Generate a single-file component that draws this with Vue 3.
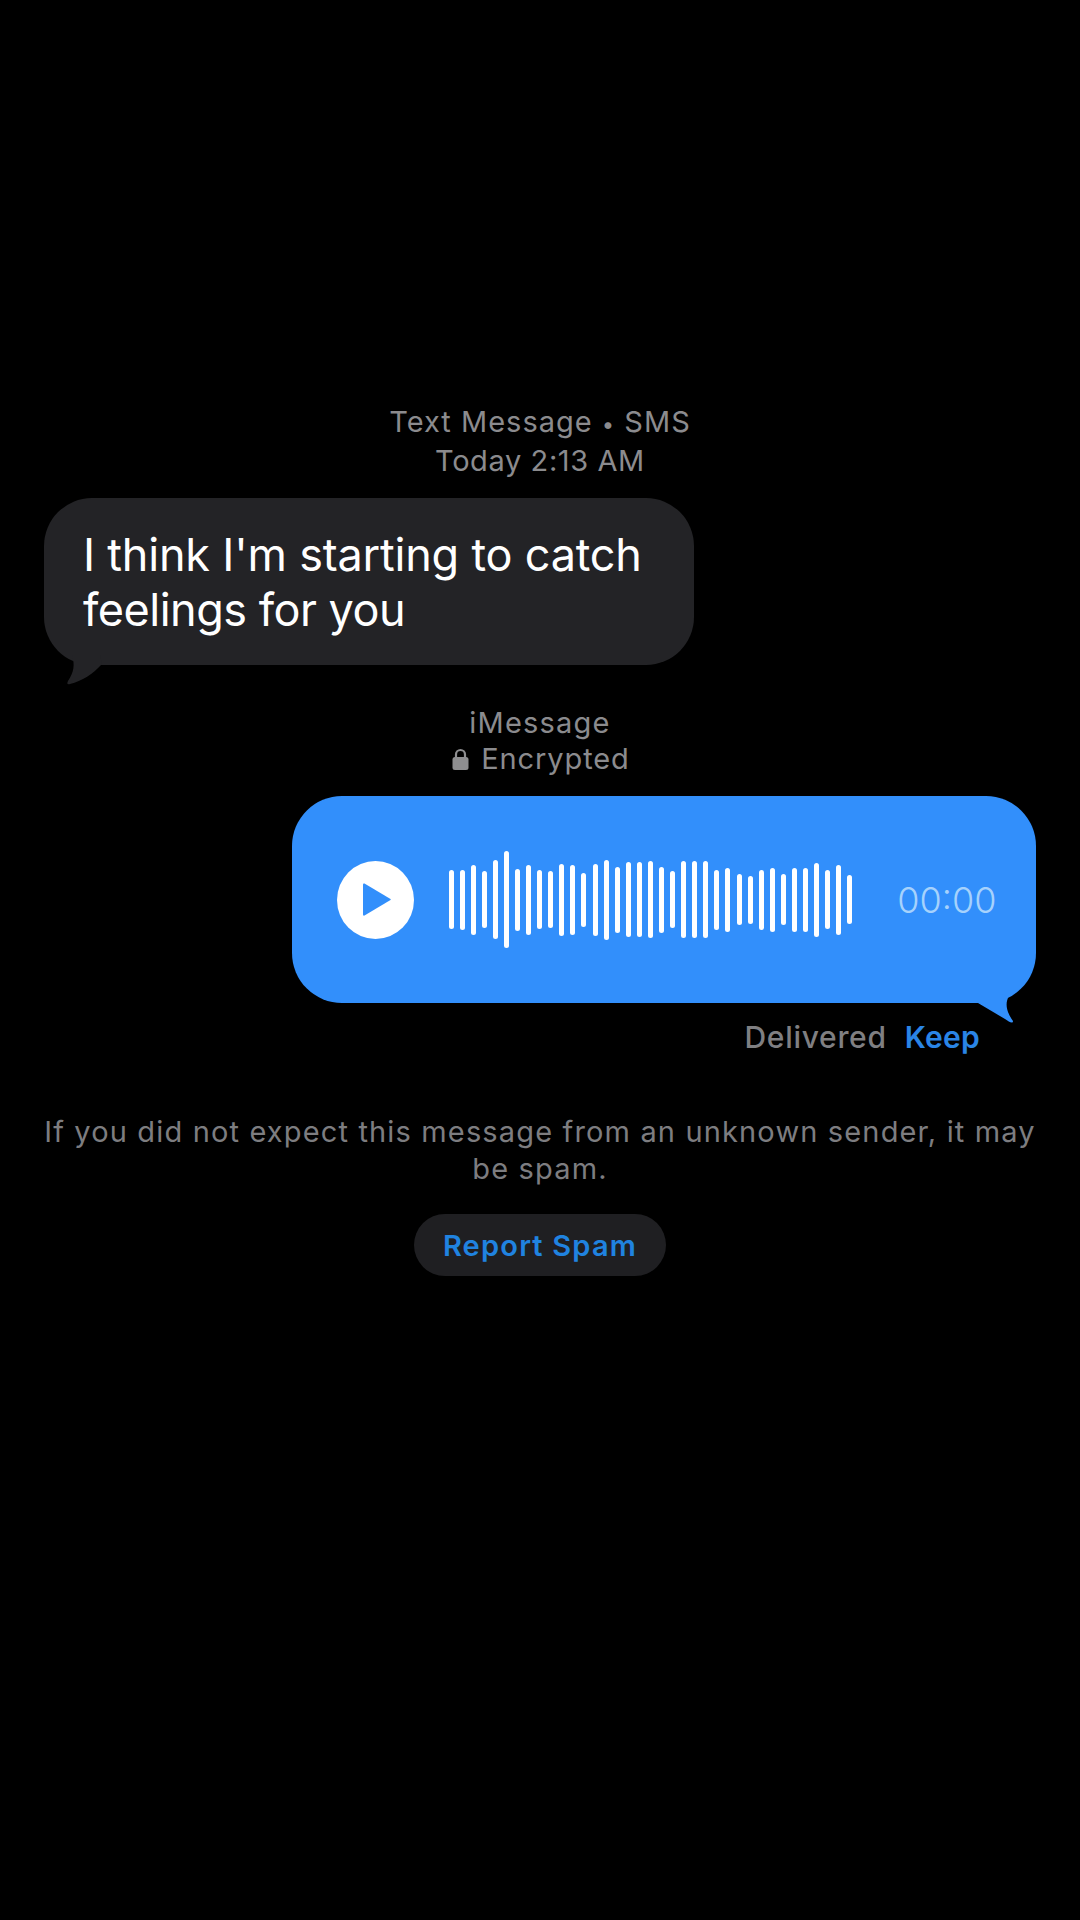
<script setup>
const bars = [59,60,70,57,79,97,62,70,59,57,72,70,54,72,80,66,75,75,77,66,57,77,77,77,60,64,51,48,60,64,51,64,64,74,59,70,49]
</script>

<template>
  <main class="screen">
    <header class="meta first">
      <div class="l1">Text Message <span class="dot">•</span> SMS</div>
      <div>Today 2:13 AM</div>
    </header>

    <section class="bubble incoming">
      <p><span class="line one">I think I'm starting to catch</span><span class="line two">feelings for you</span></p>
      <svg class="tail tail-in" width="50" height="40" viewBox="0 0 50 40">
        <path d="M8 7 C11 17 10 24 4 33 Q2 37 6 36 C18 33 29 26 38 16 L36 7 Z" fill="#232326" />
      </svg>
    </section>

    <header class="meta second">
      <div class="imsg">iMessage</div>
      <div class="enc">
        <svg class="lock" width="17" height="22" viewBox="0 0 17 22">
          <path d="M4 10 V6.5 a4.5 4.5 0 0 1 9 0 V10" fill="none" stroke="#8e8e90" stroke-width="2.2" />
          <rect x="0.5" y="9" width="16" height="13" rx="2.5" fill="#8e8e90" />
        </svg>
        <span>Encrypted</span>
      </div>
    </header>

    <section class="bubble outgoing">
      <div class="play">
        <svg width="28" height="33" viewBox="0 0 28 33">
          <path d="M1.5 0.5 L27.5 16 Q28 16.5 27.5 17 L1.5 32.5 Q0 33 0 31.5 V1.5 Q0 0 1.5 0.5 Z" fill="#328ffb" />
        </svg>
      </div>
      <div class="wave">
        <span v-for="(h, i) in bars" :key="i" class="bar" :style="{ height: h + 'px' }"></span>
      </div>
      <span class="time">00:00</span>
      <svg class="tail tail-out" width="50" height="42" viewBox="0 0 50 42">
        <path d="M2 17 L29 33 C33 36 37 38 37 35 C34 31 32 26 32 26 C30 20 30 15 33 10 L24 8 L0 8 L0 17 Z" fill="#328ffb" />
      </svg>
    </section>

    <div class="status">
      <span class="delivered">Delivered</span>
      <span class="keep">Keep</span>
    </div>

    <p class="notice">If you did not expect this message from an unknown sender, it may<br />be spam.</p>

    <button class="report">Report Spam</button>
  </main>
</template>

<style>
html, body { background: #000; margin: 0; }
</style>

<style scoped>
.screen {
  width: 1080px;
  height: 1920px;
  background: #000;
  box-sizing: border-box;
  padding-top: 402px;
  display: flex;
  flex-direction: column;
  font-family: Inter, "Liberation Sans", sans-serif;
  overflow: hidden;
}
.meta {
  text-align: center;
  color: #8b8b8e;
  font-size: 29px;
  letter-spacing: 0.6px;
}
.l1 { letter-spacing: 1px; }
.dot { font-size: 22px; line-height: 0; }
.imsg { letter-spacing: 1.2px; }
.meta.first { line-height: 39px; }
.meta.second { line-height: 36px; margin-top: 40px; }
.enc {
  display: flex;
  justify-content: center;
  align-items: center;
  gap: 12px;
  margin-left: 2px;
  letter-spacing: 0.9px;
}
.lock { flex: none; }
.bubble { position: relative; box-sizing: border-box; }
.incoming {
  width: 650px;
  height: 167px;
  margin: 18px 0 0 44px;
  padding: 29px 0 0 39px;
  background: #232326;
  border-radius: 48px;
}
.incoming p {
  margin: 0;
  font-size: 45px;
  line-height: 55px;
  color: #fff;
  white-space: nowrap;
}
.line { display: block; }
.line.one { letter-spacing: -0.2px; }
.line.two { letter-spacing: -0.5px; }
.tail { position: absolute; }
.tail-in { left: 20px; top: 150px; }
.tail-out { left: 684px; top: 190px; }
.outgoing {
  width: 744px;
  height: 207px;
  margin: 19px 0 0 292px;
  padding-left: 45px;
  background: #328ffb;
  border-radius: 50px;
  display: flex;
  align-items: center;
}
.play {
  width: 77px;
  height: 78px;
  border-radius: 50%;
  background: #fff;
  flex: none;
  display: flex;
  align-items: center;
  justify-content: center;
  padding-left: 3px;
  box-sizing: border-box;
}
.wave {
  display: flex;
  align-items: center;
  gap: 6.08px;
  margin-left: 34.5px;
  flex: none;
}
.bar {
  width: 5px;
  border-radius: 3px;
  background: #fff;
  flex: none;
}
.time {
  margin-left: 45px;
  font-size: 36px;
  color: #a6d2fc;
  font-weight: 300;
}
.status {
  display: flex;
  justify-content: flex-end;
  gap: 18px;
  margin: 16px 100px 0 0;
  font-size: 30px;
  line-height: 36px;
  font-weight: 500;
}
.delivered { color: #7f7f82; letter-spacing: 0.7px; }
.keep { color: #2a85e6; font-weight: 600; letter-spacing: 0.3px; }
.notice {
  margin: 58px 0 0;
  text-align: center;
  font-size: 29px;
  line-height: 37px;
  letter-spacing: 1.15px;
  color: #7d7d80;
  white-space: nowrap;
}
.report {
  align-self: center;
  width: 252px;
  height: 62px;
  margin-top: 27px;
  border: 0;
  padding: 0;
  border-radius: 31px;
  background: #1f1f22;
  color: #2083e0;
  font-family: inherit;
  font-size: 29px;
  font-weight: 600;
  letter-spacing: 1.2px;
}
</style>
